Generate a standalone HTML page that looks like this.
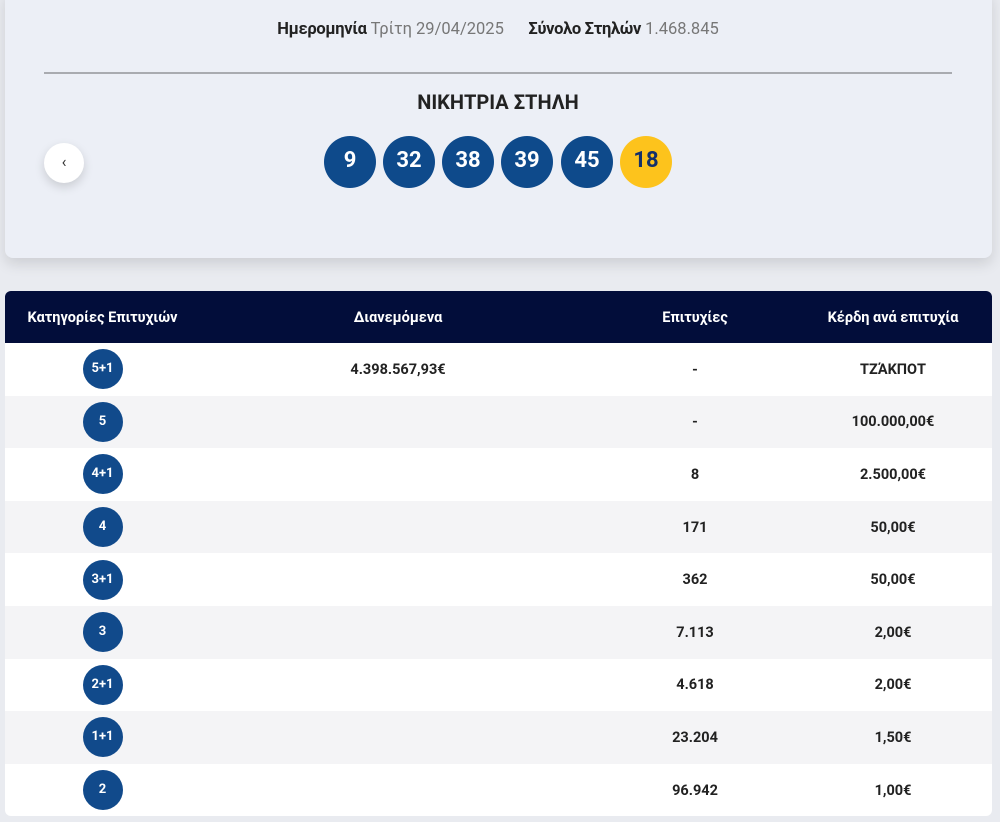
<!DOCTYPE html>
<html><head><meta charset="utf-8"><style>
body{margin:0;width:1000px;height:822px;background:#e9ebf0;font-family:"Roboto","Liberation Sans","DejaVu Sans",sans-serif;position:relative;overflow:hidden}
.card{position:absolute;left:5px;top:-10px;width:987px;height:268px;background:#eceff6;border-radius:8px;box-shadow:0 6px 14px rgba(0,0,0,.12)}
.info{position:absolute;top:20px;left:0;width:996px;text-align:center;font-size:16.5px;color:#777}
.info b{color:#222;font-weight:bold;letter-spacing:-0.3px}
.line{position:absolute;left:44px;top:72px;width:908px;height:2px;background:#a9abb0}
.title{position:absolute;top:90px;left:0;width:996px;text-align:center;font-size:20px;font-weight:bold;color:#222}
.ball{position:absolute;top:136px;width:52px;height:52px;border-radius:50%;background:#0e4a8b;color:#fff;font-weight:bold;font-size:22px;text-align:center;line-height:50px}
.ball.y{background:#fdc31c;color:#14306a}
.prev{position:absolute;left:44px;top:143px;width:40px;height:40px;border-radius:50%;background:#fff;box-shadow:0 4px 10px rgba(0,0,0,.15);text-align:center;line-height:38px;font-size:16px;color:#333}
table{position:absolute;left:5px;top:291px;width:987px;table-layout:fixed;border-collapse:collapse;font-size:14.5px;font-weight:bold;color:#222;border-radius:6px;overflow:hidden}
th{background:#020d3a;color:#fff;height:52px;font-size:14.5px;padding:0}
td{height:52.6px;text-align:center;padding:0}
tr:nth-child(odd) td{background:#f4f4f6}
tr:nth-child(even) td{background:#fff}
.c{display:inline-block;width:40px;height:40px;border-radius:50%;background:#114a8b;color:#fff;line-height:40px;font-size:13px;vertical-align:middle}
</style></head><body>
<div class="card"></div>
<div class="info"><b>Ημερομηνία</b> Τρίτη 29/04/2025 &nbsp;&nbsp;&nbsp;&nbsp;&nbsp;<b>Σύνολο Στηλών</b> 1.468.845</div>
<div class="line"></div>
<div class="title">ΝΙΚΗΤΡΙΑ ΣΤΗΛΗ</div>
<div class="prev">‹</div>
<div class="ball" style="left:324px">9</div>
<div class="ball" style="left:383px">32</div>
<div class="ball" style="left:442px">38</div>
<div class="ball" style="left:501px">39</div>
<div class="ball" style="left:561px">45</div>
<div class="ball y" style="left:620px">18</div>
<table>
<colgroup><col style="width:195px"><col style="width:396px"><col style="width:198px"><col style="width:198px"></colgroup>
<tr><th>Κατηγορίες Επιτυχιών</th><th>Διανεμόμενα</th><th>Επιτυχίες</th><th>Κέρδη ανά επιτυχία</th></tr>
<tr><td><span class="c">5+1</span></td><td>4.398.567,93€</td><td>-</td><td>ΤΖΆΚΠΟΤ</td></tr>
<tr><td><span class="c">5</span></td><td></td><td>-</td><td>100.000,00€</td></tr>
<tr><td><span class="c">4+1</span></td><td></td><td>8</td><td>2.500,00€</td></tr>
<tr><td><span class="c">4</span></td><td></td><td>171</td><td>50,00€</td></tr>
<tr><td><span class="c">3+1</span></td><td></td><td>362</td><td>50,00€</td></tr>
<tr><td><span class="c">3</span></td><td></td><td>7.113</td><td>2,00€</td></tr>
<tr><td><span class="c">2+1</span></td><td></td><td>4.618</td><td>2,00€</td></tr>
<tr><td><span class="c">1+1</span></td><td></td><td>23.204</td><td>1,50€</td></tr>
<tr><td><span class="c">2</span></td><td></td><td>96.942</td><td>1,00€</td></tr>
</table>
</body></html>
